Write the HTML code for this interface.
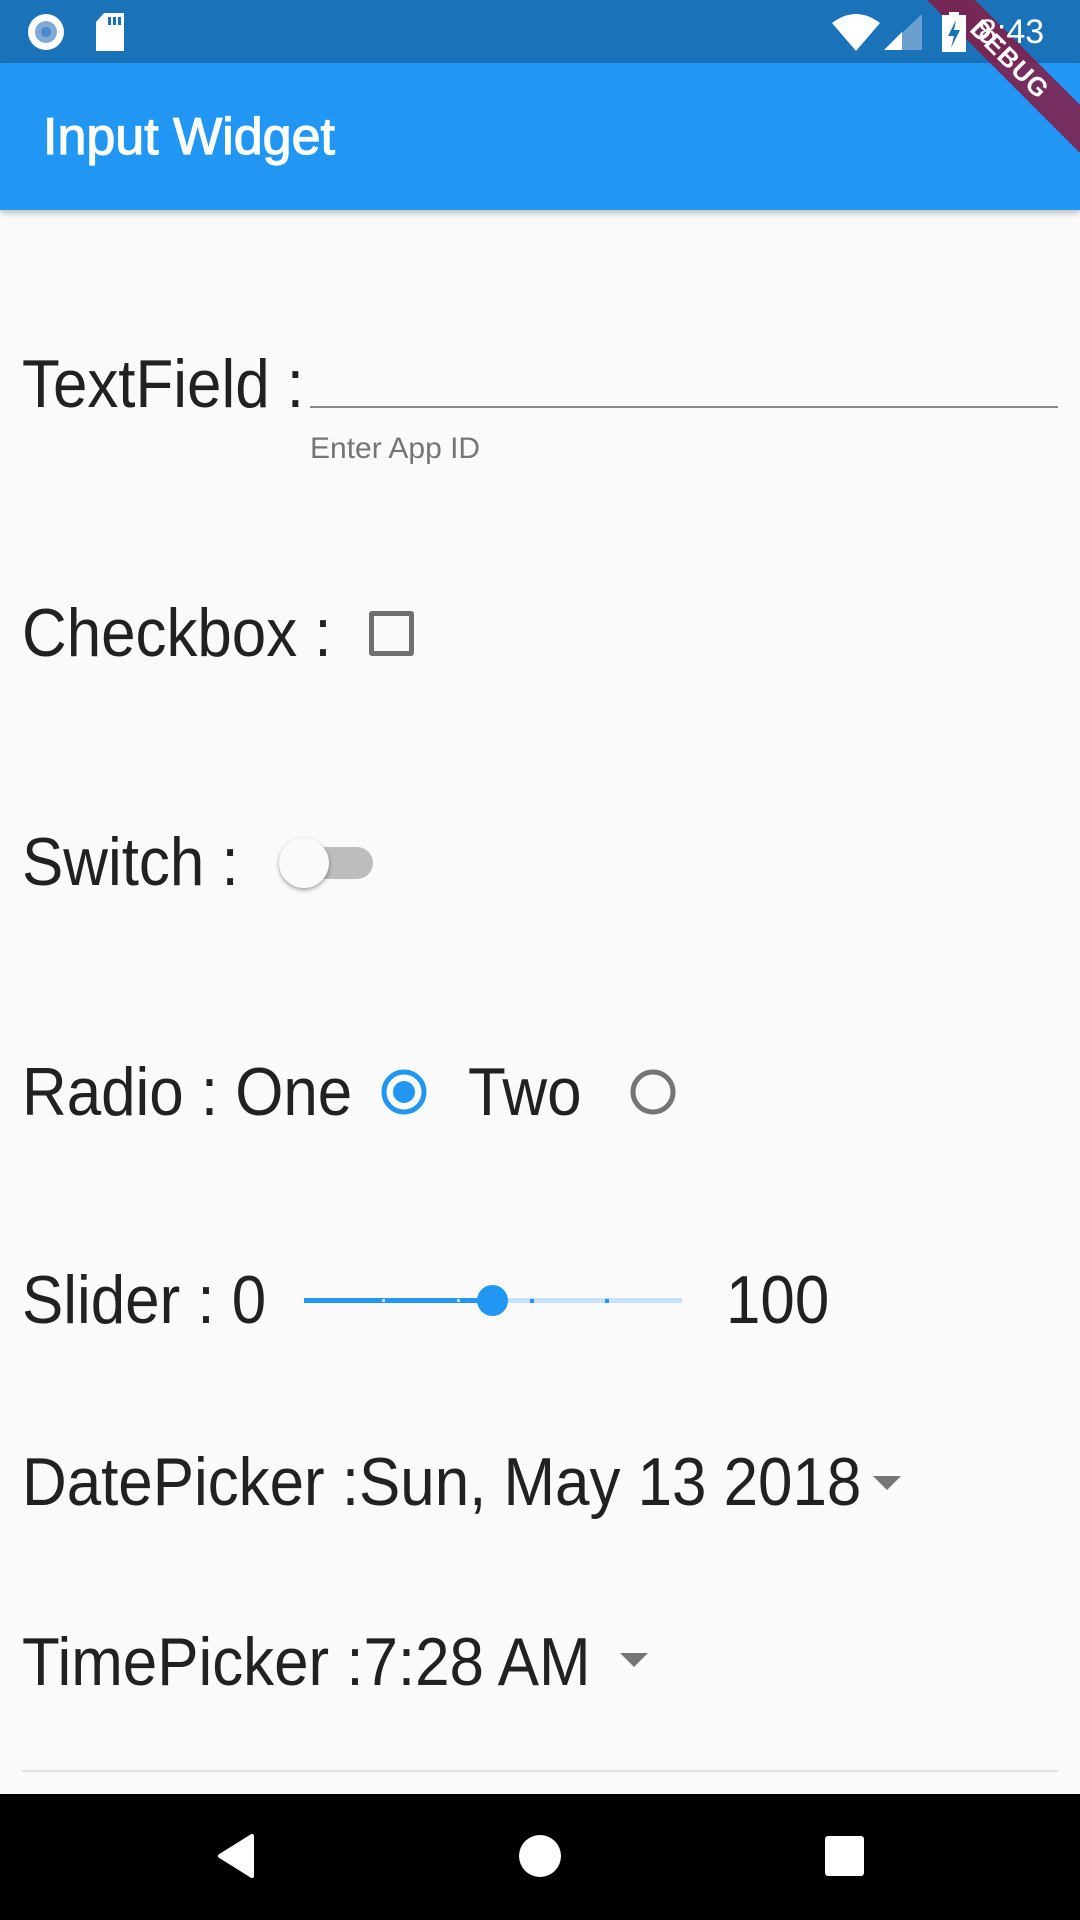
<!DOCTYPE html>
<html><head><meta charset="utf-8"><style>
*{margin:0;padding:0;box-sizing:border-box}
body{width:1080px;height:1920px;background:#fafafa;position:relative;overflow:hidden;font-family:"Liberation Sans",sans-serif;color:#212121}
.t{position:absolute;font-size:68px;line-height:68px;white-space:nowrap;transform:scaleX(0.91);transform-origin:left top}
.abs{position:absolute}
</style></head><body>
<div class="abs" style="left:0;top:0;width:1080px;height:63px;background:#1a72b9"></div>
<div class="abs" style="left:0;top:63px;width:1080px;height:147px;background:#2196f3;box-shadow:0 3px 6px rgba(0,0,0,0.25)"></div>
<!-- debug banner -->
<div class="abs" style="left:865px;top:42px;width:290px;height:34px;background:rgba(140,20,60,0.8);transform:rotate(45deg);color:#fff;font-weight:bold;font-size:26px;line-height:34px;text-align:center;letter-spacing:1px">DEBUG</div>
<!-- status icons -->
<svg class="abs" style="left:26px;top:12px" width="40" height="40"><circle cx="20" cy="20" r="18" fill="#fff"/><circle cx="20" cy="20" r="11" fill="#7fa9d6"/><circle cx="20" cy="20" r="5" fill="#4e88c8"/></svg>
<svg class="abs" style="left:94px;top:13px" width="32" height="38"><path d="M10 0H30V38H2V9Z" fill="#fff"/><rect x="14" y="4" width="3" height="8" fill="#1a72b9"/><rect x="19" y="4" width="3" height="8" fill="#1a72b9"/><rect x="24" y="4" width="3" height="8" fill="#1a72b9"/></svg>
<svg class="abs" style="left:832px;top:13px" width="48" height="38"><path d="M0 10Q24 -8 48 10L24 38Z" fill="#fff"/></svg>
<svg class="abs" style="left:884px;top:14px" width="38" height="38"><path d="M38 0V36H0Z" fill="#6a9fd0"/><path d="M18 18V36H0Z" fill="#fff"/></svg>
<svg class="abs" style="left:942px;top:12px" width="24" height="40"><rect x="7" y="0" width="10" height="4" fill="#fff"/><rect x="0" y="3" width="24" height="37" fill="#fff"/><path d="M14 8L6 24H12L9 36L18 18H12Z" fill="#1a72b9"/></svg>
<div class="abs" style="left:978px;top:8px;color:#fff;font-size:34px;line-height:48px">8:43</div>
<div class="abs" style="left:43px;top:111px;color:#fff;font-size:52px;line-height:52px;-webkit-text-stroke:1.2px #fff;white-space:nowrap">Input Widget</div>

<div class="t" style="left:22px;top:350px">TextField :</div>
<div class="abs" style="left:310px;top:406px;width:748px;height:2px;background:#8a8a8a"></div>
<div class="abs" style="left:310px;top:431px;font-size:30px;line-height:36px;color:#757575">Enter App ID</div>

<div class="t" style="left:22px;top:599px">Checkbox :</div>
<div class="abs" style="left:369px;top:611px;width:45px;height:45px;border:5px solid #6f6f6f;border-radius:3px"></div>

<div class="t" style="left:22px;top:828px">Switch :</div>
<div class="abs" style="left:306px;top:847px;width:67px;height:32px;border-radius:16px;background:#bdbdbd"></div>
<div class="abs" style="left:279px;top:838px;width:50px;height:50px;border-radius:50%;background:#fafafa;box-shadow:0 2px 4px rgba(0,0,0,0.35)"></div>

<div class="t" style="left:22px;top:1058px">Radio : One</div>
<svg class="abs" style="left:378px;top:1066px" width="52" height="52"><circle cx="26" cy="26" r="20" fill="none" stroke="#2196f3" stroke-width="5"/><circle cx="26" cy="26" r="11" fill="#2196f3"/></svg>
<div class="t" style="left:468px;top:1058px">Two</div>
<svg class="abs" style="left:627px;top:1066px" width="52" height="52"><circle cx="26" cy="26" r="20" fill="none" stroke="#757575" stroke-width="5"/></svg>

<div class="t" style="left:22px;top:1266px">Slider : 0</div>
<div class="abs" style="left:304px;top:1298px;width:188px;height:5px;background:#2196f3"></div>
<div class="abs" style="left:492px;top:1298px;width:190px;height:5px;background:#c6e0fb"></div>
<div class="abs" style="left:382px;top:1299px;width:3px;height:3px;background:#c6e0fb"></div>
<div class="abs" style="left:457px;top:1299px;width:3px;height:3px;background:#c6e0fb"></div>
<div class="abs" style="left:530px;top:1299px;width:4px;height:4px;background:#2196f3"></div>
<div class="abs" style="left:605px;top:1299px;width:4px;height:4px;background:#2196f3"></div>
<div class="abs" style="left:477px;top:1285px;width:31px;height:31px;border-radius:50%;background:#2196f3"></div>
<div class="t" style="left:726px;top:1266px">100</div>

<div class="t" style="left:22px;top:1448px">DatePicker :Sun, May 13 2018</div>
<svg class="abs" style="left:873px;top:1476px" width="28" height="14"><path d="M0 0H28L14 14Z" fill="#757575"/></svg>

<div class="t" style="left:22px;top:1628px">TimePicker :7:28 AM</div>
<svg class="abs" style="left:620px;top:1653px" width="28" height="14"><path d="M0 0H28L14 14Z" fill="#757575"/></svg>

<div class="abs" style="left:22px;top:1770px;width:1036px;height:2px;background:#e0e0e0"></div>

<div class="abs" style="left:0;top:1794px;width:1080px;height:126px;background:#000"></div>
<svg class="abs" style="left:216px;top:1834px" width="40" height="44"><path d="M36 2V42L4 22Z" fill="#fff" stroke="#fff" stroke-width="4" stroke-linejoin="round"/></svg>
<div class="abs" style="left:519px;top:1835px;width:42px;height:42px;border-radius:50%;background:#fff"></div>
<div class="abs" style="left:825px;top:1836px;width:39px;height:40px;border-radius:3px;background:#fff"></div>
</body></html>
